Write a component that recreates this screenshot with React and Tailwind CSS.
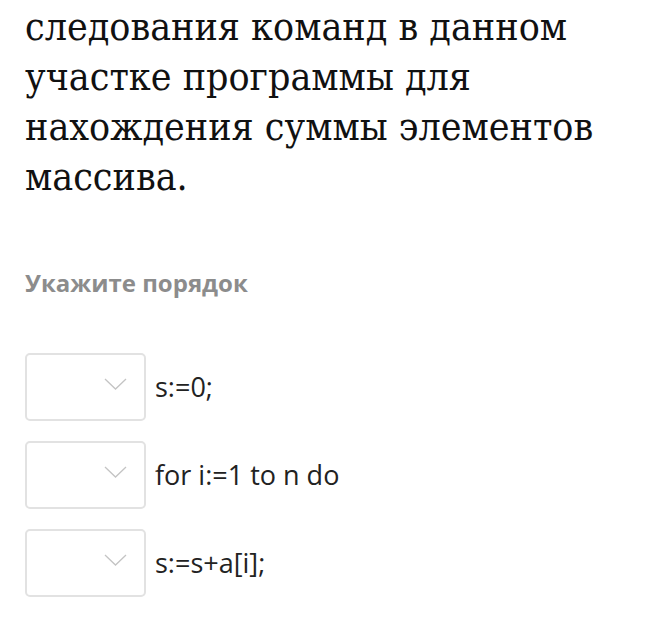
const rows = ['s:=0;', 'for i:=1 to n do', 's:=s+a[i];'];

export default function App() {
  return (
    <div className="min-h-screen bg-white pl-[25px] pr-4">
      <p className="text-[39px] leading-[50px] text-[#111] pt-[2px]" style={{ fontFamily: '"DejaVu Serif Condensed", "DejaVu Serif", serif' }}>
        следования команд в данном участке программы для нахождения суммы элементов массива.
      </p>

      <h3 className="mt-[65px] text-[24px] leading-[32px] font-bold text-[#8c8c8c]" style={{ fontFamily: '"Open Sans", sans-serif' }}>
        Укажите порядок
      </h3>

      <div className="mt-[54px] flex flex-col gap-[20px]">
        {rows.map(text => (
          <div key={text} className="flex items-center gap-[9px]">
            <div className="w-[121px] h-[68px] rounded-[5px] border-2 border-[#e2e2e2] flex justify-end pr-[17px] pt-[23px] items-start">
              <svg width="23" height="12" viewBox="0 0 23 12" fill="none" stroke="#c4c4c4" strokeWidth="1.3">
                <polyline points="1,1 11.5,11 22,1" />
              </svg>
            </div>
            <span className="text-[27px] text-[#222]" style={{ fontFamily: '"Open Sans", sans-serif' }}>{text}</span>
          </div>
        ))}
      </div>
    </div>
  );
}
